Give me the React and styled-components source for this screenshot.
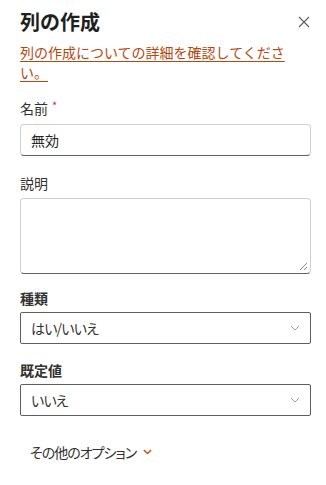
import React from "react";
import { styled, createGlobalStyle } from "styled-components";

const GlobalStyle = createGlobalStyle`
  html, body {
    margin: 0;
    padding: 0;
    background: #ffffff;
  }
  body {
    font-family: "Noto Sans CJK JP", "Noto Sans", sans-serif;
    color: #323130;
  }
`;

const Panel = styled.div`
  width: 326px;
  height: 485px;
  box-sizing: border-box;
  padding: 8px 15px 0 20px;
  display: flex;
  flex-direction: column;
`;

const Header = styled.div`
  display: flex;
  align-items: center;
  justify-content: space-between;
  height: 28px;
`;

const Title = styled.h1`
  margin: 0;
  font-size: 20px;
  line-height: 28px;
  font-weight: 700;
  color: #201f1e;
`;

const CloseButton = styled.button`
  border: none;
  background: none;
  padding: 0;
  margin-right: -2px;
  margin-top: 0;
  width: 18px;
  height: 18px;
  display: flex;
  align-items: center;
  justify-content: center;
  color: #605e5c;
  cursor: pointer;
`;

const HelpLink = styled.a`
  margin-top: 6px;
  font-size: 14px;
  line-height: 20px;
  color: #b5480e;
  text-decoration: underline;
  text-underline-offset: 3px;
  width: 270px;
`;

const Field = styled.div`
  display: flex;
  flex-direction: column;
  margin-top: ${(p) => p.$top}px;
`;

const Label = styled.label`
  font-size: 14px;
  line-height: 20px;
  font-weight: ${(p) => (p.$bold ? 700 : 400)};
  color: #323130;
  margin-bottom: ${(p) => p.$gap}px;
  display: flex;
  align-items: flex-start;
`;

const Required = styled.span`
  color: #c4314b;
  font-size: 11px;
  line-height: 14px;
  margin-left: 4px;
`;

const TextInput = styled.div`
  height: 32px;
  box-sizing: border-box;
  border: 1px solid #d1d1d1;
  border-bottom-color: #616161;
  border-radius: 4px;
  padding: 0 10px;
  display: flex;
  align-items: center;
  font-size: 14px;
  color: #242424;
`;

const TextArea = styled.div`
  position: relative;
  height: 76px;
  box-sizing: border-box;
  border: 1px solid #d1d1d1;
  border-bottom-color: #616161;
  border-radius: 4px;
`;

const Grip = styled.svg`
  position: absolute;
  right: 2px;
  bottom: 2px;
`;

const Select = styled.div`
  height: 32px;
  box-sizing: border-box;
  border: 1px solid #605e5c;
  border-radius: 2px;
  padding: 0 10px 0 10px;
  display: flex;
  align-items: center;
  justify-content: space-between;
  font-size: 14px;
  font-feature-settings: "palt";
  letter-spacing: -0.8px;
  color: #323130;
`;

const MoreOptions = styled.button`
  margin-top: 26px;
  align-self: flex-start;
  border: none;
  background: none;
  padding: 0 0 0 10px;
  font-family: inherit;
  font-size: 14px;
  font-feature-settings: "palt";
  letter-spacing: -1px;
  line-height: 20px;
  color: #323130;
  display: flex;
  align-items: center;
  gap: 7px;
  cursor: pointer;
`;

const Chevron = ({ color = "#a19f9d", size = 10, stroke = 1 }) => (
  <svg width={size} height={size * 0.6} viewBox="0 0 10 6" fill="none">
    <path d="M1 1l4 4 4-4" stroke={color} strokeWidth={stroke} />
  </svg>
);

export default function App() {
  return (
    <>
      <GlobalStyle />
      <Panel>
        <Header>
          <Title>列の作成</Title>
          <CloseButton aria-label="閉じる">
            <svg width="12" height="12" viewBox="0 0 12 12">
              <path d="M1 1l10 10M11 1L1 11" stroke="#605e5c" strokeWidth="1.1" />
            </svg>
          </CloseButton>
        </Header>
        <HelpLink href="#">列の作成についての詳細を確認してください。</HelpLink>

        <Field $top={16}>
          <Label $gap={6}>
            名前<Required>*</Required>
          </Label>
          <TextInput>無効</TextInput>
        </Field>

        <Field $top={17}>
          <Label $gap={5}>説明</Label>
          <TextArea>
            <Grip width="9" height="9" viewBox="0 0 9 9">
              <path d="M8 1L1 8M8 5L5 8" stroke="#6b6b6b" strokeWidth="0.8" />
            </Grip>
          </TextArea>
        </Field>

        <Field $top={14}>
          <Label $bold $gap={4}>種類</Label>
          <Select>
            はい/いいえ
            <Chevron />
          </Select>
        </Field>

        <Field $top={16}>
          <Label $bold $gap={4}>既定値</Label>
          <Select>
            いいえ
            <Chevron />
          </Select>
        </Field>

        <MoreOptions>
          その他のオプション
          <Chevron color="#ca5010" size={9} stroke={1.6} />
        </MoreOptions>
      </Panel>
    </>
  );
}
